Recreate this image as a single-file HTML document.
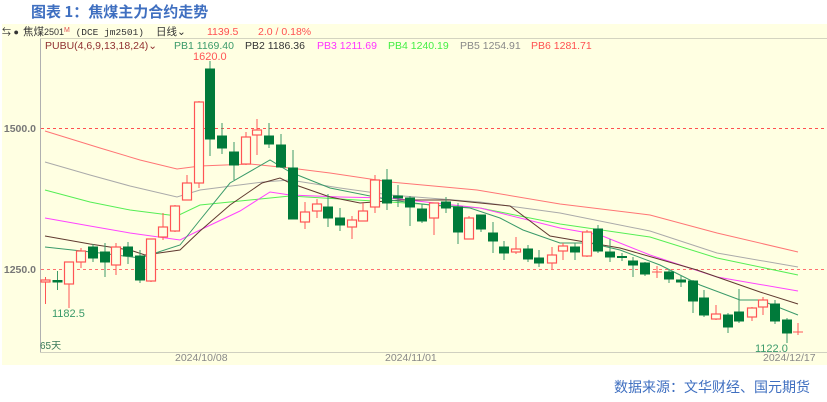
<!DOCTYPE html>
<html><head><meta charset="utf-8"><style>
html,body{margin:0;padding:0;background:#fff;width:827px;height:402px;overflow:hidden}
svg{display:block;font-family:"Liberation Sans","WenQuanYi Zen Hei","Noto Sans CJK SC",sans-serif}
.u line{stroke:#ff5555;stroke-width:1}
.u rect{fill:#ffffe4;stroke:#ff5555;stroke-width:1.2}
.d line{stroke:#3e9a68;stroke-width:1}
.d rect{fill:#007a3a;stroke:#007a3a;stroke-width:1}
.m{fill:none;stroke-width:1}
</style></head><body>
<svg width="827" height="402" viewBox="0 0 827 402" xmlns="http://www.w3.org/2000/svg">
<rect x="0" y="0" width="827" height="402" fill="#fff"/>
<text x="31" y="17" font-size="15" font-weight="bold" fill="#3f6fc0" font-family="'Noto Sans CJK SC','WenQuanYi Zen Hei',sans-serif">图表 1：焦煤主力合约走势</text>
<rect x="2" y="24" width="825" height="341" fill="#ffffe2"/>
<line x1="40" y1="38.5" x2="827" y2="38.5" stroke="#d4d4c0"/>
<line x1="40.5" y1="39" x2="40.5" y2="352" stroke="#b0b0b0"/>
<line x1="40" y1="352.5" x2="827" y2="352.5" stroke="#d0d0c0"/>
<g font-size="10.5">
<text x="2" y="35" fill="#333" font-size="9">⇆ ●</text>
<text x="23" y="35" fill="#333" font-size="10.5">焦煤<tspan font-size="9">2501</tspan><tspan fill="#e05050" font-size="7" dy="-3">M</tspan><tspan dy="3" font-family="'Liberation Mono',monospace" font-size="9.5"> (DCE jm2501)</tspan></text>
<text x="156" y="35" fill="#333">日线⌄</text>
<text x="207" y="35" fill="#ff5050">1139.5</text>
<text x="258" y="35" fill="#ff5050">2.0 / 0.18%</text>
<text x="45" y="49" fill="#903030">PUBU(4,6,9,13,18,24)⌄</text>
<text x="174" y="49" fill="#3a9a6a">PB1 1169.40</text>
<text x="245" y="49" fill="#333">PB2 1186.36</text>
<text x="317" y="49" fill="#ff33ff">PB3 1211.69</text>
<text x="388" y="49" fill="#44ee44">PB4 1240.19</text>
<text x="460" y="49" fill="#888">PB5 1254.91</text>
<text x="531" y="49" fill="#ff5050">PB6 1281.71</text>
<text x="36" y="132" text-anchor="end" fill="#777" font-weight="bold">1500.0</text>
<text x="36" y="273" text-anchor="end" fill="#777" font-weight="bold">1250.0</text>
<text x="193" y="60" fill="#ff5555" font-size="11">1620.0</text>
<text x="52" y="317" fill="#3a9a6a" font-size="11">1182.5</text>
<text x="755" y="352" fill="#3a9a6a" font-size="11">1122.0</text>
<text x="40" y="349" fill="#3a7a5a" font-size="10">65天</text>
<text x="175" y="361" fill="#888" font-size="10.5">2024/10/08</text>
<text x="385" y="361" fill="#888" font-size="10.5">2024/11/01</text>
<text x="763" y="361" fill="#888" font-size="10.5">2024/12/17</text>
</g>
<line x1="41" y1="128.5" x2="827" y2="128.5" stroke="#ff5050" stroke-dasharray="3,3"/>
<line x1="41" y1="269.5" x2="827" y2="269.5" stroke="#ff7070" stroke-dasharray="3,3"/>
<polyline class="m" stroke="#ff7575" points="45,131 100,148 140,160 177,169 200,166 250,164 290,168 330,173 390,182 477,190 560,204 650,215 717,233 798,252"/>
<polyline class="m" stroke="#aaa" points="45,162 90,175 130,186 177,197 200,190 263,182 290,180 340,188 390,195 480,202 560,213 650,231 717,253 798,267"/>
<polyline class="m" stroke="#55ee55" points="45,190 90,202 130,210 177,216 200,205 240,201 290,196 340,199 390,202 480,208 560,224 650,237 717,258 798,275"/>
<polyline class="m" stroke="#ff44ff" points="45,218 90,226 130,233 180,240 200,230 240,211 270,192 290,195 340,197 390,198 480,208 560,228 600,235 650,255 717,277 798,291"/>
<polyline class="m" stroke="#603a30" points="45,236 90,244 130,250 145,255 180,250 200,231 230,205 262,183 280,178 290,183 330,197 360,203 400,200 450,200 510,206 550,236 620,248 697,270 760,292 798,304"/>
<polyline class="m" stroke="#3a9a6a" points="45,247 100,253 140,258 180,245 200,220 230,183 270,160 290,172 330,188 390,200 430,205 470,208 500,218 523,230 560,243 590,243 620,250 660,265 700,285 740,300 760,300 798,315"/>
<g class="u"><line x1="45.5" y1="277" x2="45.5" y2="304"/><rect x="41" y="280" width="9" height="2"/></g>
<g class="d"><line x1="57.5" y1="271" x2="57.5" y2="290"/><rect x="53" y="280.5" width="9" height="1.5"/></g>
<g class="u"><line x1="69" y1="262" x2="69" y2="308"/><rect x="64.5" y="262" width="9" height="22"/></g>
<g class="u"><line x1="81" y1="248" x2="81" y2="268"/><rect x="76.5" y="251" width="9" height="11"/></g>
<g class="d"><line x1="93" y1="244" x2="93" y2="262"/><rect x="88.5" y="247" width="9" height="11"/></g>
<g class="d"><line x1="105" y1="243" x2="105" y2="277"/><rect x="100.5" y="252" width="9" height="10"/></g>
<g class="u"><line x1="116" y1="243" x2="116" y2="275"/><rect x="111.5" y="247" width="9" height="18"/></g>
<g class="d"><line x1="128" y1="242" x2="128" y2="264"/><rect x="123.5" y="247" width="9" height="9"/></g>
<g class="d"><line x1="140" y1="250" x2="140" y2="283"/><rect x="135.5" y="256" width="9" height="24"/></g>
<g class="u"><line x1="151" y1="239" x2="151" y2="282"/><rect x="146.5" y="239" width="9" height="42"/></g>
<g class="u"><line x1="163" y1="213" x2="163" y2="240"/><rect x="158.5" y="227" width="9" height="10"/></g>
<g class="u"><line x1="175" y1="205" x2="175" y2="232"/><rect x="170.5" y="206" width="9" height="25"/></g>
<g class="u"><line x1="187" y1="175" x2="187" y2="200"/><rect x="182.5" y="183" width="9" height="17"/></g>
<g class="u"><line x1="199" y1="101" x2="199" y2="188"/><rect x="194.5" y="102" width="9" height="81"/></g>
<g class="d"><line x1="210" y1="61" x2="210" y2="156"/><rect x="205.5" y="69" width="9" height="70"/></g>
<g class="d"><line x1="222" y1="123" x2="222" y2="154"/><rect x="217.5" y="136" width="9" height="12"/></g>
<g class="d"><line x1="234" y1="142" x2="234" y2="180"/><rect x="229.5" y="152" width="9" height="13"/></g>
<g class="u"><line x1="246" y1="132" x2="246" y2="165"/><rect x="241.5" y="137" width="9" height="27"/></g>
<g class="u"><line x1="257" y1="119" x2="257" y2="155"/><rect x="252.5" y="130" width="9" height="5"/></g>
<g class="d"><line x1="269" y1="123" x2="269" y2="148"/><rect x="264.5" y="136" width="9" height="8"/></g>
<g class="d"><line x1="281" y1="134" x2="281" y2="168"/><rect x="276.5" y="145" width="9" height="22"/></g>
<g class="d"><line x1="293" y1="150" x2="293" y2="219"/><rect x="288.5" y="168" width="9" height="51"/></g>
<g class="u"><line x1="305" y1="202" x2="305" y2="229"/><rect x="300.5" y="212" width="9" height="10"/></g>
<g class="u"><line x1="317" y1="199" x2="317" y2="218"/><rect x="312.5" y="204" width="9" height="7"/></g>
<g class="d"><line x1="328" y1="194" x2="328" y2="227"/><rect x="323.5" y="207" width="9" height="11"/></g>
<g class="d"><line x1="340" y1="208" x2="340" y2="231"/><rect x="335.5" y="218" width="9" height="7"/></g>
<g class="u"><line x1="352" y1="216" x2="352" y2="239"/><rect x="347.5" y="220" width="9" height="7"/></g>
<g class="u"><line x1="363" y1="203" x2="363" y2="221"/><rect x="358.5" y="211" width="9" height="10"/></g>
<g class="u"><line x1="375" y1="175" x2="375" y2="213"/><rect x="370.5" y="180" width="9" height="27"/></g>
<g class="d"><line x1="387" y1="169" x2="387" y2="210"/><rect x="382.5" y="180" width="9" height="23"/></g>
<g class="d"><line x1="398" y1="185" x2="398" y2="207"/><rect x="393.5" y="196" width="9" height="2"/></g>
<g class="d"><line x1="410" y1="196" x2="410" y2="226"/><rect x="405.5" y="198" width="9" height="9"/></g>
<g class="d"><line x1="422" y1="204" x2="422" y2="223"/><rect x="417.5" y="209" width="9" height="12"/></g>
<g class="u"><line x1="434" y1="203" x2="434" y2="235"/><rect x="429.5" y="203" width="9" height="15"/></g>
<g class="d"><line x1="446" y1="197" x2="446" y2="213"/><rect x="441.5" y="202" width="9" height="6"/></g>
<g class="d"><line x1="458" y1="203" x2="458" y2="244"/><rect x="453.5" y="207" width="9" height="25"/></g>
<g class="u"><line x1="469" y1="216" x2="469" y2="239"/><rect x="464.5" y="218" width="9" height="21"/></g>
<g class="d"><line x1="481" y1="215" x2="481" y2="232"/><rect x="476.5" y="215" width="9" height="14"/></g>
<g class="d"><line x1="493" y1="222" x2="493" y2="253"/><rect x="488.5" y="233" width="9" height="8"/></g>
<g class="d"><line x1="504" y1="241" x2="504" y2="260"/><rect x="499.5" y="247" width="9" height="6"/></g>
<g class="u"><line x1="516" y1="237" x2="516" y2="254"/><rect x="511.5" y="249" width="9" height="3"/></g>
<g class="d"><line x1="528" y1="245" x2="528" y2="262"/><rect x="523.5" y="249" width="9" height="10"/></g>
<g class="d"><line x1="539" y1="250" x2="539" y2="267"/><rect x="534.5" y="258" width="9" height="5"/></g>
<g class="u"><line x1="552" y1="247" x2="552" y2="269"/><rect x="547.5" y="255" width="9" height="8"/></g>
<g class="u"><line x1="563" y1="243" x2="563" y2="260"/><rect x="558.5" y="246" width="9" height="5"/></g>
<g class="d"><line x1="575" y1="243" x2="575" y2="260"/><rect x="570.5" y="247" width="9" height="5"/></g>
<g class="u"><line x1="587" y1="230" x2="587" y2="257"/><rect x="582.5" y="232" width="9" height="24"/></g>
<g class="d"><line x1="598" y1="225" x2="598" y2="253"/><rect x="593.5" y="229" width="9" height="22"/></g>
<g class="d"><line x1="610" y1="239" x2="610" y2="262"/><rect x="605.5" y="252" width="9" height="5"/></g>
<g class="d"><line x1="622" y1="253" x2="622" y2="261"/><rect x="617.5" y="256.5" width="9" height="1"/></g>
<g class="d"><line x1="633" y1="257" x2="633" y2="277"/><rect x="628.5" y="261" width="9" height="4"/></g>
<g class="d"><line x1="645" y1="262" x2="645" y2="276"/><rect x="640.5" y="263" width="9" height="11"/></g>
<g class="u"><line x1="657" y1="266" x2="657" y2="278"/><line x1="652" y1="272" x2="662" y2="272"/></g>
<g class="d"><line x1="669" y1="270" x2="669" y2="283"/><rect x="664.5" y="272" width="9" height="7"/></g>
<g class="d"><line x1="681" y1="276" x2="681" y2="287"/><rect x="676.5" y="280" width="9" height="2"/></g>
<g class="d"><line x1="693" y1="280" x2="693" y2="313"/><rect x="688.5" y="281" width="9" height="20"/></g>
<g class="d"><line x1="704" y1="290" x2="704" y2="317"/><rect x="699.5" y="298" width="9" height="17"/></g>
<g class="u"><line x1="716" y1="305" x2="716" y2="320"/><rect x="711.5" y="314" width="9" height="5"/></g>
<g class="d"><line x1="728" y1="313" x2="728" y2="333"/><rect x="723.5" y="315" width="9" height="12"/></g>
<g class="d"><line x1="739" y1="289" x2="739" y2="323"/><rect x="734.5" y="312" width="9" height="9"/></g>
<g class="u"><line x1="752" y1="307" x2="752" y2="321"/><rect x="747.5" y="308" width="9" height="9"/></g>
<g class="u"><line x1="763" y1="297" x2="763" y2="315"/><rect x="758.5" y="300" width="9" height="7"/></g>
<g class="d"><line x1="775" y1="300" x2="775" y2="324"/><rect x="770.5" y="304" width="9" height="17"/></g>
<g class="d"><line x1="787" y1="318" x2="787" y2="343"/><rect x="782.5" y="320" width="9" height="13"/></g>
<g class="u"><line x1="798" y1="323" x2="798" y2="335"/><line x1="793" y1="332" x2="803" y2="332"/></g>
<text x="810" y="392" text-anchor="end" font-size="14" fill="#3f6fc0" font-family="'Noto Sans CJK SC','WenQuanYi Zen Hei',sans-serif">数据来源：文华财经、国元期货</text>
</svg>
</body></html>
